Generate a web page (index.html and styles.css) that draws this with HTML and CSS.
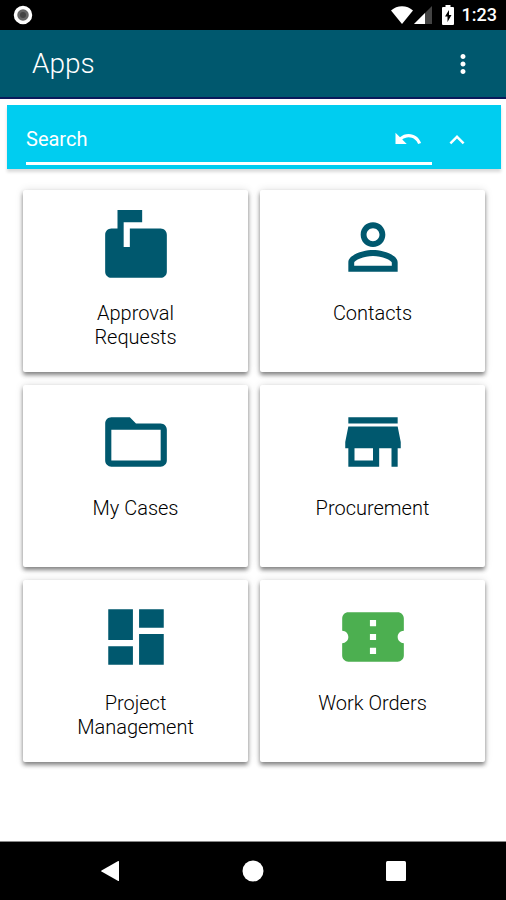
FILE: index.html
```html
<!DOCTYPE html>
<html lang="en">

<head>
  <meta charset="UTF-8">
  <meta name="viewport" content="width=device-width, initial-scale=1.0">
  <title>Apps</title>
  <link rel="stylesheet" href="styles.css">
</head>

<body>
  <div class="status-bar">
    <svg class="record" width="20" height="20" viewBox="0 0 20 20">
      <circle cx="10" cy="10" r="7.5" fill="#666" stroke="#fff" stroke-width="3.5" />
      <circle cx="10" cy="10" r="3" fill="#444" />
    </svg>
    <div class="status-icons">
      <svg class="wifi" width="24" height="20" viewBox="0 0 24 20">
        <path fill="#fff" d="M12 19L1 5.500C7-.2 17-.2 23 5.500z" />
      </svg>
      <svg class="signal" width="18" height="18" viewBox="0 0 18 18">
        <path fill="#444" d="M0 18L18 0v18z" />
        <path fill="#fff" d="M0 18L11 7v11z" />
      </svg>
      <svg class="battery" width="12" height="20" viewBox="0 0 12 20">
        <path fill="#fff" d="M3.500 0h5v2H11q1 0 1 1v16q0 1-1 1H1q-1 0-1-1V3q0-1 1-1h2.500z" />
        <path fill="#000" d="M7 5L3 11.500h2.500V17L9.500 10H7z" />
      </svg>
      <span class="clock">1:23</span>
    </div>
  </div>

  <header class="app-bar">
    <h1>Apps</h1>
    <button type="button" class="icon-btn" aria-label="More options">
      <svg width="30" height="30" viewBox="0 0 24 24">
        <path d="M12 8c1.100 0 2-.9 2-2s-.9-2-2-2-2 .9-2 2 .9 2 2 2zm0 2c-1.100 0-2 .9-2 2s.9 2 2 2 2-.9 2-2-.9-2-2-2zm0 6c-1.100 0-2 .9-2 2s.9 2 2 2 2-.9 2-2-.9-2-2-2z" />
      </svg>
    </button>
  </header>

  <main>
    <form class="search">
      <div class="field">
        <input type="text" name="search" placeholder="Search" aria-label="Search">
        <button type="reset" class="icon-btn" aria-label="Undo">
          <svg width="30" height="30" viewBox="0 0 24 24">
            <path d="M12.500 8c-2.650 0-5.050.99-6.900 2.600L2 7v9h9l-3.620-3.620c1.390-1.160 3.160-1.880 5.120-1.880 3.540 0 6.550 2.310 7.600 5.500l2.370-.78C21.080 11.030 17.150 8 12.500 8z" />
          </svg>
        </button>
      </div>
      <button type="button" class="icon-btn" aria-label="Collapse">
        <svg width="30" height="30" viewBox="0 0 24 24">
          <path d="M12 8l-6 6 1.410 1.410L12 10.830l4.590 4.580L18 14z" />
        </svg>
      </button>
    </form>

    <nav class="apps">
      <a class="card" href="#approvals">
        <svg viewBox="0 0 24 24">
          <path d="M20 6H10v6H8V4h6V0H6v6H4c-1.100 0-2 .9-2 2v12c0 1.100.9 2 2 2h16c1.100 0 2-.9 2-2V8c0-1.100-.9-2-2-2z" />
        </svg>
        <span>Approval Requests</span>
      </a>
      <a class="card" href="#contacts">
        <svg viewBox="0 0 24 24">
          <path d="M12 5.900c1.160 0 2.100.94 2.100 2.100s-.94 2.100-2.100 2.100S9.900 9.160 9.900 8s.94-2.100 2.100-2.100m0 9c2.970 0 6.100 1.460 6.100 2.100v1.100H5.900V17c0-.64 3.130-2.100 6.100-2.100M12 4C9.790 4 8 5.790 8 8s1.790 4 4 4 4-1.790 4-4-1.790-4-4-4zm0 9c-2.670 0-8 1.340-8 4v3h16v-3c0-2.660-5.330-4-8-4z" />
        </svg>
        <span>Contacts</span>
      </a>
      <a class="card" href="#cases">
        <svg viewBox="0 0 24 24">
          <path d="M20 6h-8l-2-2H4c-1.100 0-1.990.9-1.990 2L2 18c0 1.100.9 2 2 2h16c1.100 0 2-.9 2-2V8c0-1.100-.9-2-2-2zm0 12H4V8h16v10z" />
        </svg>
        <span>My Cases</span>
      </a>
      <a class="card" href="#procurement">
        <svg viewBox="0 0 24 24">
          <path d="M20 4H4v2h16V4zm1 10v-2l-1-5H4l-1 5v2h1v6h10v-6h4v6h2v-6h1zm-9 4H6v-4h6v4z" />
        </svg>
        <span>Procurement</span>
      </a>
      <a class="card" href="#projects">
        <svg viewBox="0 0 24 24">
          <path d="M3 13h8V3H3v10zm0 8h8v-6H3v6zm10 0h8V11h-8v10zm0-18v6h8V3h-8z" />
        </svg>
        <span>Project Management</span>
      </a>
      <a class="card green" href="#orders">
        <svg viewBox="0 0 24 24">
          <path d="M22 10V6c0-1.110-.9-2-2-2H4c-1.100 0-1.990.89-1.990 2v4c1.100 0 1.990.9 1.990 2s-.89 2-2 2v4c0 1.100.9 2 2 2h16c1.100 0 2-.9 2-2v-4c-1.100 0-2-.9-2-2s.9-2 2-2zm-9 7.500h-2v-2h2v2zm0-4.500h-2v-2h2v2zm0-4.500h-2v-2h2v2z" />
        </svg>
        <span>Work Orders</span>
      </a>
    </nav>
  </main>

  <footer class="nav-bar">
    <button type="button" aria-label="Back">
      <svg width="22" height="22" viewBox="0 0 22 22">
        <path d="M20 1.500v19q0 .8-.8.4L2.500 11.600q-.8-.6 0-1.200L19.200 1q.8-.3.8.5z" />
      </svg>
    </button>
    <button type="button" aria-label="Home">
      <svg width="22" height="22" viewBox="0 0 22 22">
        <circle cx="11" cy="11" r="10.500" />
      </svg>
    </button>
    <button type="button" aria-label="Recent apps">
      <svg width="22" height="22" viewBox="0 0 22 22">
        <rect x="1" y="1" width="20" height="20" rx="1.500" />
      </svg>
    </button>
  </footer>
</body>

</html>
```
FILE: styles.css
```css
* {
  box-sizing: border-box;
}

body {
  margin: 0;
  min-height: 100vh;
  display: flex;
  flex-direction: column;
  font-family: Roboto, "Liberation Sans", sans-serif;
  font-size: 20px;
  line-height: 24px;
  background-color: #fff;
}

button {
  border: 0;
  padding: 0;
  background: none;
}

svg {
  display: block;
}

.status-bar {
  display: flex;
  justify-content: space-between;
  align-items: center;
  height: 30px;
  padding: 0 9px 0 13px;
  background-color: #000;
  color: #fff;
}

.status-icons {
  display: flex;
  align-items: center;
}

.signal {
  margin-right: 10px;
}

.battery {
  margin-right: 8px;
}

.clock {
  font-size: 18px;
  font-weight: 500;
}

.app-bar {
  display: flex;
  justify-content: space-between;
  align-items: center;
  height: 69px;
  padding: 0 28px 0 32px;
  background-color: #00586e;
  border-bottom: 2px solid #0a1a5c;
  color: #fff;
}

.app-bar h1 {
  margin: 0;
  font-size: 28px;
  font-weight: 300;
}

.icon-btn svg {
  fill: #fff;
}

.search {
  display: flex;
  gap: 10px;
  height: 64px;
  margin: 6px 5px 0 7px;
  padding: 10px 29px 4px 19px;
  background-color: #00cdf0;
  box-shadow: 0 3px 3px rgba(0, 0, 0, 0.15);
}

main {
  flex: 1;
}

.field {
  flex: 1;
  display: flex;
  align-items: center;
  padding-right: 9px;
  border-bottom: 3px solid #fff;
}

.field input {
  flex: 1;
  min-width: 0;
  border: 0;
  padding: 0;
  outline: 0;
  background: none;
  color: #fff;
  font: inherit;
}

.field input::placeholder {
  color: #fff;
  opacity: 1;
}

.apps {
  display: grid;
  grid-template-columns: 1fr 1fr;
  gap: 13px 12px;
  padding: 21px 21px 20px 23px;
}

.card {
  display: flex;
  flex-direction: column;
  align-items: center;
  gap: 17px;
  min-height: 182px;
  padding: 20px 40px;
  border-radius: 2px;
  background-color: #fff;
  box-shadow: 0 3px 4px rgba(0, 0, 0, 0.45), 0 0 8px rgba(0, 0, 0, 0.12);
  color: #000;
  font-weight: 300;
  text-align: center;
  text-decoration: none;
}

.card svg {
  width: 74px;
  height: 74px;
  fill: #00586e;
}

.green svg {
  fill: #4caf50;
}

.nav-bar {
  display: grid;
  grid-template-columns: repeat(3, 1fr);
  height: 59px;
  padding: 0 39px;
  background-color: #000;
  border-top: 1px solid #888;
}

.nav-bar svg {
  margin: 0 auto;
  fill: #fff;
}
```
